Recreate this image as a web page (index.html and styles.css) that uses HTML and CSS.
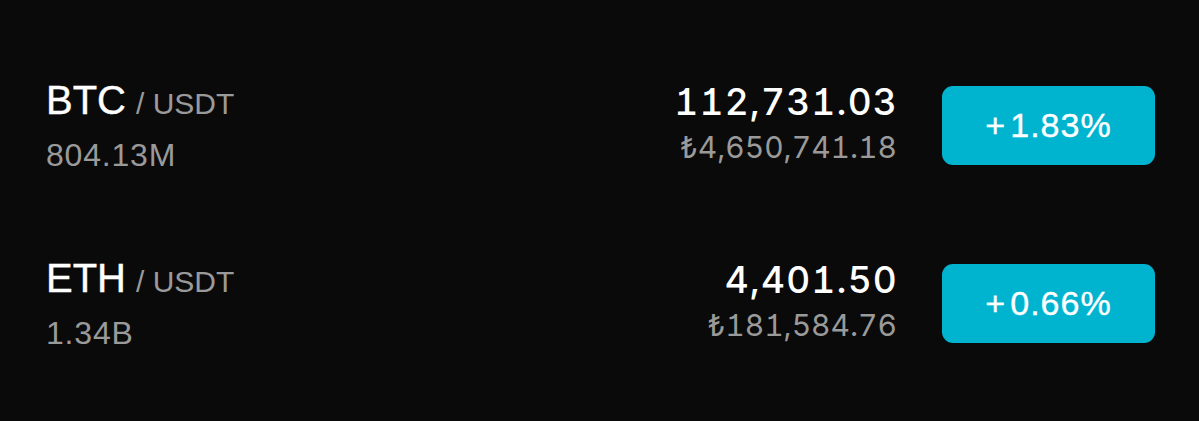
FILE: index.html
```html
<!DOCTYPE html>
<html lang="en">
<head>
  <meta charset="UTF-8">
  <title>Markets</title>
  <link rel="stylesheet" href="styles.css">
</head>
<body>

<div class="list">
  <div class="row">
    <div class="pair">
      <div class="pair-name"><span class="base">BTC</span><span class="quote">/ USDT</span></div>
      <div class="volume">804.13M</div>
    </div>
    <div class="price">
      <div class="last">112,731.03</div>
      <div class="fiat">₺4,650,741.18</div>
    </div>
    <div class="change up"><span class="sign">+</span>1.83%</div>
  </div>

  <div class="row">
    <div class="pair">
      <div class="pair-name"><span class="base">ETH</span><span class="quote">/ USDT</span></div>
      <div class="volume">1.34B</div>
    </div>
    <div class="price">
      <div class="last">4,401.50</div>
      <div class="fiat">₺181,584.76</div>
    </div>
    <div class="change up"><span class="sign">+</span>0.66%</div>
  </div>
</div>

</body>
</html>
```

FILE: styles.css
```css
body {
  margin: 0;
  padding: 0;
  background: #0a0a0a;
  font-family: "Liberation Sans", Arial, sans-serif;
  color: #fff;
}

.list {
  padding: 36px 44px 0 46px;
}

.row {
  display: flex;
  align-items: center;
  height: 178px;
}

.pair {
  flex: 1;
}

.pair-name {
  display: flex;
  align-items: baseline;
  gap: 10px;
  line-height: 46px;
}

.base {
  font-size: 40px;
  color: #fff;
  -webkit-text-stroke: 0.4px #fff;
}

.quote {
  font-size: 30px;
  color: #9a9a9a;
}

.volume {
  margin-top: 9px;
  font-size: 32px;
  line-height: 38px;
  color: #9a9a9a;
  letter-spacing: 0.8px;
}

.price {
  text-align: right;
  padding-bottom: 5px;
  font-family: Inter, "Liberation Sans", sans-serif;
  font-feature-settings: "tnum", "cv01";
}

.last {
  font-size: 37px;
  font-weight: 500;
  letter-spacing: 1.2px;
  margin-right: -1px;
  color: #fff;
  line-height: 44px;
}

.fiat {
  margin-top: 4px;
  font-size: 30px;
  color: #9a9a9a;
  line-height: 38px;
}

.change {
  margin-left: 45px;
  width: 213px;
  height: 79px;
  border-radius: 11px;
  display: flex;
  justify-content: center;
  align-items: center;
  font-size: 34px;
  letter-spacing: 1px;
  color: #fff;
  -webkit-text-stroke: 0.4px #fff;
}

.change .sign {
  margin-right: 4px;
}

.change.up {
  background: #00b4d0;
}
```
